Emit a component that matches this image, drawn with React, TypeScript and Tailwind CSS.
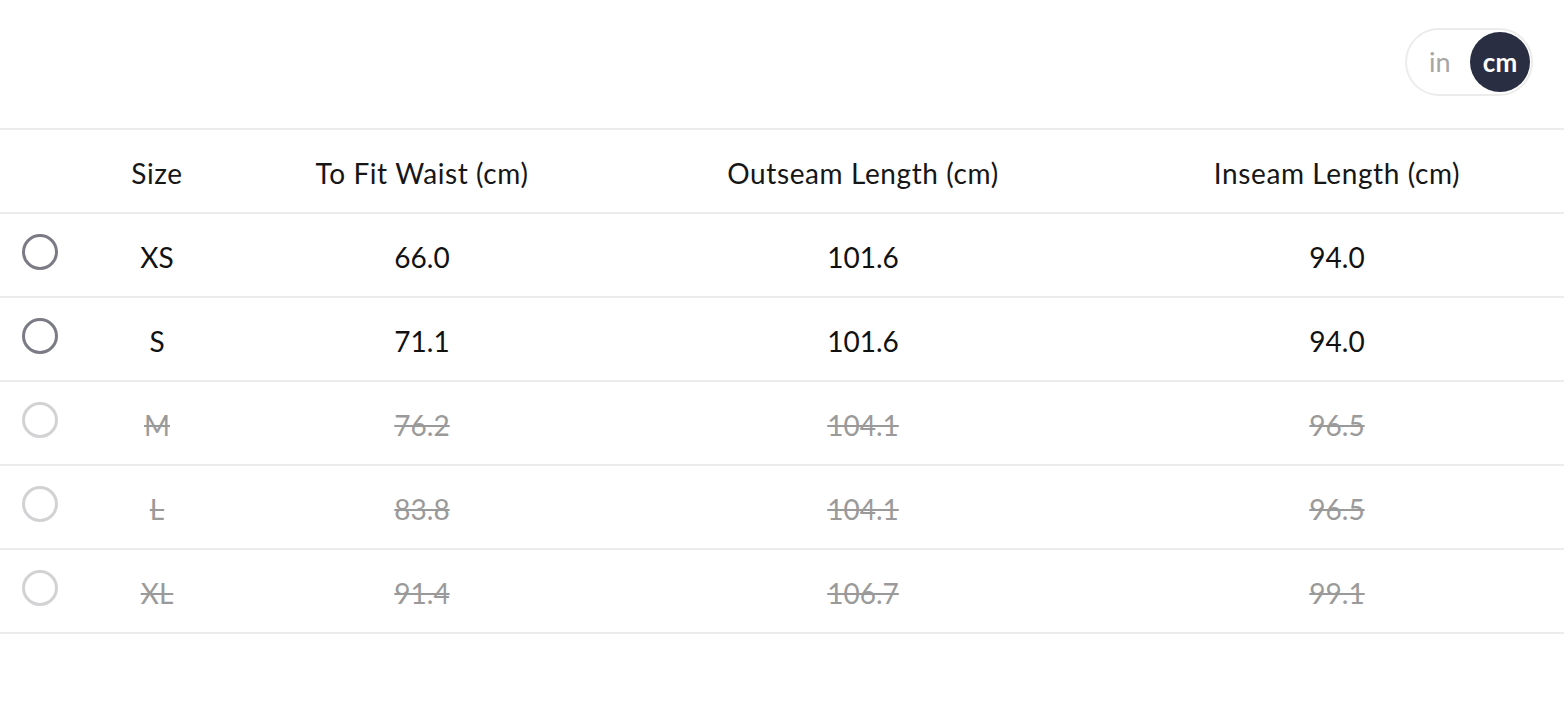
import React, { useState } from 'react'

type Row = {
  size: string
  waist: string
  outseam: string
  inseam: string
  available: boolean
}

const rows: Row[] = [
  { size: 'XS', waist: '66.0', outseam: '101.6', inseam: '94.0', available: true },
  { size: 'S', waist: '71.1', outseam: '101.6', inseam: '94.0', available: true },
  { size: 'M', waist: '76.2', outseam: '104.1', inseam: '96.5', available: false },
  { size: 'L', waist: '83.8', outseam: '104.1', inseam: '96.5', available: false },
  { size: 'XL', waist: '91.4', outseam: '106.7', inseam: '99.1', available: false },
]

const cols = 'grid grid-cols-[80px_154px_376px_506px_1fr] items-center pr-[6px] pt-[3px]'

const App: React.FC = () => {
  const [unit, setUnit] = useState<'in' | 'cm'>('cm')

  return (
    <div className="w-full min-h-screen bg-white text-[#1b1b1b] font-['Lato',sans-serif]">
      <div className="h-[128px] flex justify-end items-start pt-[28px] pr-[31px]">
        <div className="h-[68px] w-[128px] rounded-full border-2 border-[#ececec] flex items-center justify-between pl-[22px] pr-[1px]">
          <button
            onClick={() => setUnit('in')}
            className={
              unit === 'in'
                ? 'h-[60px] w-[60px] rounded-full bg-[#292e43] text-white font-bold text-[26px]'
                : 'text-[27px] text-[#a6a6a6]'
            }
          >
            in
          </button>
          <button
            onClick={() => setUnit('cm')}
            className={
              unit === 'cm'
                ? 'h-[60px] w-[60px] rounded-full bg-[#292e43] text-white font-bold text-[26px] leading-none'
                : 'text-[27px] text-[#a6a6a6]'
            }
          >
            cm
          </button>
        </div>
      </div>

      <div className="border-t-2 border-[#ececec]">
        <div className={`${cols} h-[84px] border-b-2 border-[#ececec] text-[28px] tracking-[0.6px] text-center text-[#161616]`}>
          <div></div>
          <div>Size</div>
          <div>To Fit Waist (cm)</div>
          <div>Outseam Length (cm)</div>
          <div>Inseam Length (cm)</div>
        </div>
        {rows.map((r) => (
          <div
            key={r.size}
            className={`${cols} h-[84px] border-b-2 border-[#ececec] text-[28px] text-center ${
              r.available ? 'text-[#111111]' : 'text-[#9a9a9a] line-through'
            }`}
          >
            <div className="pl-[22px] flex -mt-[9px]">
              <span
                className={`block h-[36px] w-[36px] rounded-full border-[3px] ${
                  r.available ? 'border-[#7b7b86]' : 'border-[#d2d2d4]'
                }`}
              ></span>
            </div>
            <div>{r.size}</div>
            <div>{r.waist}</div>
            <div>{r.outseam}</div>
            <div>{r.inseam}</div>
          </div>
        ))}
      </div>
    </div>
  )
}

export default App
